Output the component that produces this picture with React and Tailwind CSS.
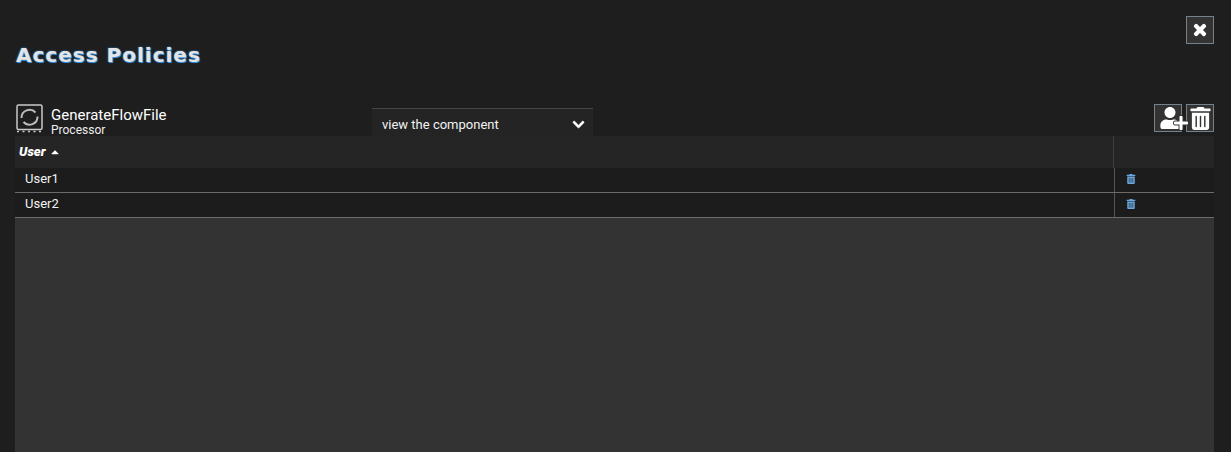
import React from 'react';
import { FaTimes, FaChevronDown, FaTrashAlt, FaUser, FaPlus, FaCaretUp } from 'react-icons/fa';

const users = ['User1', 'User2'];

function ProcessorIcon() {
  return (
    <svg width="28" height="29" viewBox="0 0 28 29" fill="none" className="ml-[1px] shrink-0">
      <rect x="1" y="1" width="25" height="24.5" rx="1.5" stroke="#c9c9c9" strokeWidth="1.5" />
      <path d="M5.5 14a8 8 0 0 1 14-5.5" stroke="#bdbdbd" strokeWidth="2" />
      <path d="M21.5 12.5a8 8 0 0 1-14 5.5" stroke="#bdbdbd" strokeWidth="2" />
      <path d="M1 27.5h2M6.5 27.5h2M12 27.5h2M17.5 27.5h2M23 27.5h2" stroke="#c9c9c9" strokeWidth="1.6" />
    </svg>
  );
}

function UserRow({ name }) {
  return (
    <div className="flex h-[25px] border-b border-[#6b6b6b] bg-[#1c1c1c]">
      <div className="flex-1 pl-[10px] text-[13px] leading-[21px] text-[#f2f2f2]">{name}</div>
      <div className="flex w-[100px] items-center border-l border-[#555555] pb-[2px] pl-[11px]">
        <FaTrashAlt className="text-[10px] text-[#6aa9e0]" />
      </div>
    </div>
  );
}

export default function App() {
  return (
    <div className="flex h-[452px] flex-col overflow-hidden bg-[#1e1e1e] pl-[15px] pr-[17px] font-['Roboto',sans-serif]">
      <div className="flex h-[104px] justify-between">
        <h1 className="ml-[1px] mt-[42px] font-['DejaVu_Sans',sans-serif] text-[20px] font-bold leading-[26px] tracking-[1px] text-[#e4e4e4] [text-shadow:1px_1px_0_#2f8fe0,0_0_2px_#2f8fe0]">
          Access Policies
        </h1>
        <button className="mt-[16px] flex h-[28px] w-[28px] items-center justify-center border border-[#76818a] bg-[#333333] text-white">
          <FaTimes className="text-[16px] stroke-white stroke-[40px]" />
        </button>
      </div>

      <div className="flex h-[32px] items-start">
        <div className="flex w-[357px] gap-[7px]">
          <ProcessorIcon />
          <div className="text-white">
            <div className="mt-[3px] text-[15px] leading-[17px]">GenerateFlowFile</div>
            <div className="text-[12px] leading-[12px] text-[#eeeeee]">Processor</div>
          </div>
        </div>
        <div className="mt-[4px] flex h-[28px] w-[221px] items-center justify-between border-t border-[#444444] bg-[#242424] pl-[10px] pr-[8px] pt-[4px] text-[13px] text-[#f2f2f2]">
          <span>view the component</span>
          <FaChevronDown className="text-[13px] stroke-white stroke-[30px] text-white" />
        </div>
        <div className="ml-auto flex gap-[4px]">
          <button className="relative flex h-[28px] w-[28px] border border-[#76818a] bg-[#333333] text-white">
            <FaUser className="absolute left-[4px] top-[2px] text-[22px]" />
            <FaPlus className="absolute left-[18px] top-[10px] text-[16px] stroke-[#333333] stroke-[60px] [paint-order:stroke]" />
          </button>
          <button className="flex h-[28px] w-[28px] items-center justify-center border border-[#76818a] bg-[#333333] text-white">
            <FaTrashAlt className="text-[23px]" />
          </button>
        </div>
      </div>

      <div className="flex flex-1 flex-col bg-[#333333]">
        <div className="flex h-[32px] bg-[#252525]">
          <div className="flex flex-1 items-center gap-[3px] pb-[1px] pl-[4px] text-[13px] font-black italic text-white">
            User
            <FaCaretUp className="text-[12px]" />
          </div>
          <div className="w-[101px] border-l border-[#3d3d3d]" />
        </div>
        {users.map((name) => (
          <UserRow key={name} name={name} />
        ))}
      </div>
    </div>
  );
}
